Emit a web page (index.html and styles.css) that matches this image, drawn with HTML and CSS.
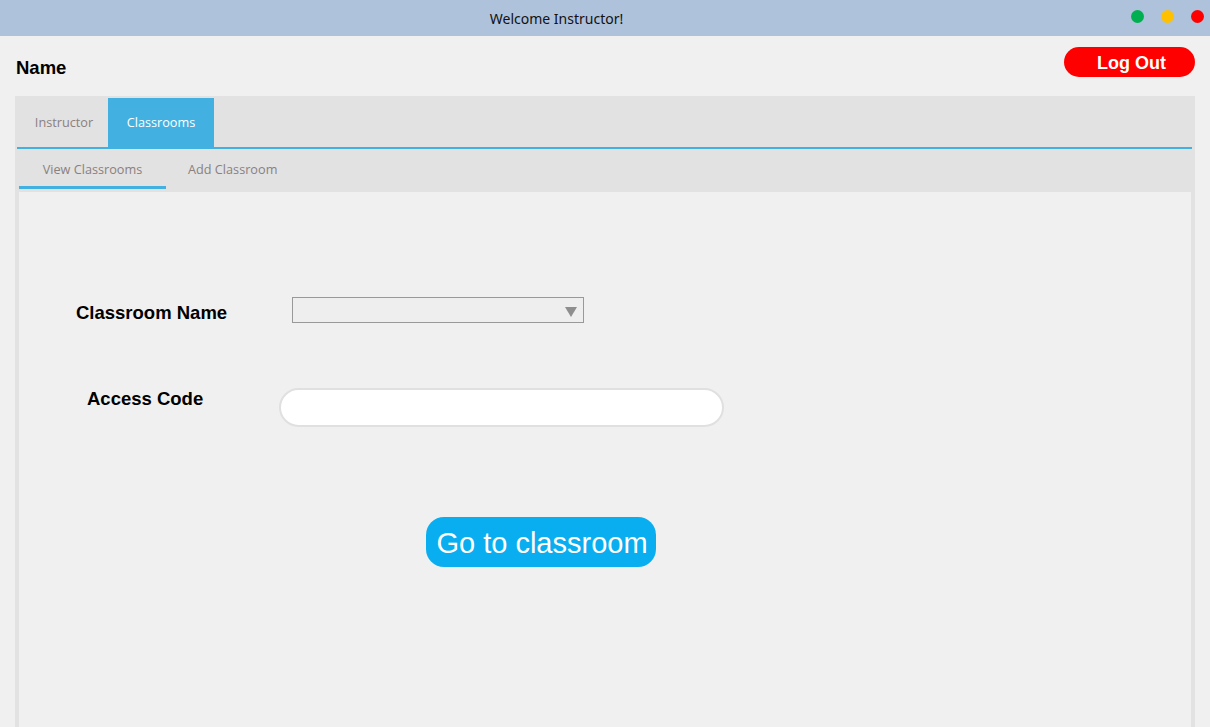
FILE: index.html
```html
<!DOCTYPE html>
<html>
<head>
<meta charset="utf-8">
<link rel="stylesheet" href="styles.css">
</head>
<body>
<div class="window">
  <div class="titlebar">
    <span class="title">Welcome Instructor!</span>
    <div class="dots">
      <span class="dot green"></span>
      <span class="dot yellow"></span>
      <span class="dot red"></span>
    </div>
  </div>
  <div class="main">
    <div class="topbar">
      <span class="name">Name</span>
      <button class="logout">Log Out</button>
    </div>
    <div class="outer-pane">
      <div class="outer-tabs">
        <div class="tab">Instructor</div>
        <div class="tab active">Classrooms</div>
      </div>
      <div class="inner-pane">
        <div class="inner-tabs">
          <div class="subtab active">View Classrooms</div>
          <div class="subtab">Add Classroom</div>
        </div>
        <div class="content">
          <div class="row row-name">
            <span class="label">Classroom Name</span>
            <div class="combo"><span class="arrow"></span></div>
          </div>
          <div class="row row-code">
            <span class="label">Access Code</span>
            <div class="field"></div>
          </div>
          <div class="row row-btn">
            <button class="go">Go to classroom</button>
          </div>
        </div>
      </div>
    </div>
  </div>
</div>
</body>
</html>
```

FILE: styles.css
```css
* { box-sizing: border-box; }
html, body { margin: 0; padding: 0; }
body {
  width: 1210px;
  height: 727px;
  overflow: hidden;
  background: #f0f0f0;
  font-family: "Liberation Sans", Arial, sans-serif;
}
.window { display: flex; flex-direction: column; height: 727px; }
.titlebar {
  height: 36px;
  background: #aec2dc;
  position: relative;
  display: flex;
  align-items: center;
  justify-content: center;
}
.title {
  font-family: "Noto Sans", sans-serif;
  font-size: 14px;
  color: #111;
  margin-left: -97px;
}
.dots {
  position: absolute;
  right: 6px;
  top: 10px;
  display: flex;
  gap: 17px;
}
.dot { width: 13px; height: 13px; border-radius: 50%; display: block; }
.dot.green { background: #00b050; }
.dot.yellow { background: #ffc000; }
.dot.red { background: #ff0000; }

.main {
  flex: 1;
  display: flex;
  flex-direction: column;
  padding: 0 15px 0 15px;
}
.topbar {
  height: 60px;
  display: flex;
  justify-content: space-between;
  align-items: flex-start;
}
.name {
  font-weight: bold;
  font-size: 18.5px;
  margin-top: 21px;
  margin-left: 1px;
}
.logout {
  margin-top: 11px;
  width: 131px;
  height: 30px;
  border: none;
  border-radius: 15px;
  background: #ff0000;
  color: #fff;
  font-family: "Liberation Sans", Arial, sans-serif;
  font-weight: bold;
  font-size: 18px;
  padding: 2px 0 0 4px;
}
.outer-pane {
  flex: 1;
  background: #e2e2e2;
  display: flex;
  flex-direction: column;
  padding: 2px 3px 0 1px;
}
.outer-tabs {
  display: flex;
  height: 51px;
  border-bottom: 2px solid #42b0e0;
  margin-left: 1px;
}
.tab {
  font-family: "Open Sans", sans-serif;
  font-size: 12.7px;
  color: #8a8080;
  display: flex;
  align-items: center;
  justify-content: center;
  padding-bottom: 1px;
  flex-shrink: 0;
}
.tab:first-child { width: 91px; padding-left: 3px; }
.tab.active { width: 106px; background: #42b0e0; color: #fff; }
.inner-pane {
  flex: 1;
  display: flex;
  flex-direction: column;
  padding: 0 1px 0 3px;
}
.inner-tabs {
  display: flex;
  height: 43px;
  align-items: flex-start;
}
.subtab {
  font-family: "Open Sans", sans-serif;
  font-size: 12.7px;
  color: #8a8080;
  height: 40px;
  display: flex;
  align-items: center;
  padding-top: 3px;
}
.subtab.active {
  width: 147px;
  justify-content: center;
  border-bottom: 3px solid #42b0e0;
}
.subtab:not(.active) { margin-left: 22px; padding-bottom: 3px; }
.content {
  flex: 1;
  background: #f0f0f0;
  display: flex;
  flex-direction: column;
}
.row { display: flex; align-items: center; }
.label { font-weight: bold; font-size: 18.5px; color: #000; }
.row-name { margin-top: 105px; height: 26px; }
.row-name .label { margin-left: 57px; width: 216px; padding-top: 5px; }
.combo {
  width: 292px;
  height: 26px;
  border: 1px solid #999;
  background: #eeeeee;
  position: relative;
}
.arrow {
  position: absolute;
  right: 6px;
  top: 9px;
  width: 0;
  height: 0;
  border-left: 6px solid transparent;
  border-right: 6px solid transparent;
  border-top: 10px solid #8e8e8e;
}
.row-code { margin-top: 65px; height: 39px; align-items: flex-start; }
.row-code .label { margin-left: 68px; width: 192px; line-height: 22px; }
.field {
  width: 445px;
  height: 39px;
  border: 2px solid #e0e0e0;
  border-radius: 20px;
  background: #fff;
}
.row-btn { margin-top: 90px; }
.go {
  margin-left: 407px;
  width: 230px;
  height: 50px;
  border: none;
  border-radius: 18px;
  background: #08aeef;
  color: #fff;
  font-family: "Liberation Sans", Arial, sans-serif;
  font-size: 29px;
  padding: 2px 0 0 2px;
}
```
